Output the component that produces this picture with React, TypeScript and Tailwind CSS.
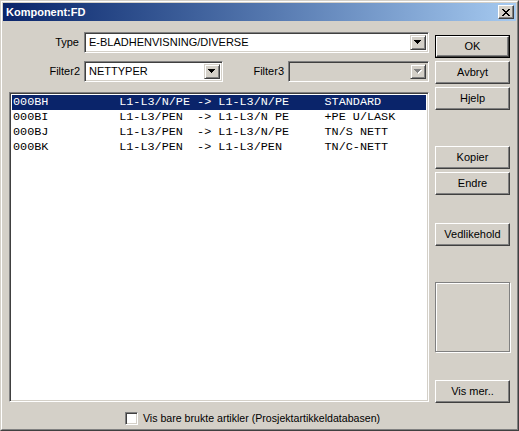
import React from "react";

const rows = [
  "000BH          L1-L3/N/PE -> L1-L3/N/PE     STANDARD",
  "000BI          L1-L3/PEN  -> L1-L3/N PE     +PE U/LASK",
  "000BJ          L1-L3/PEN  -> L1-L3/N/PE     TN/S NETT",
  "000BK          L1-L3/PEN  -> L1-L3/PEN      TN/C-NETT",
];

const raised =
  "border border-t-white border-l-white border-r-[#404040] border-b-[#404040] shadow-[inset_-1px_-1px_#808080]";
const sunken =
  "border border-t-[#808080] border-l-[#808080] border-r-white border-b-white shadow-[inset_1px_1px_#404040,inset_-1px_-1px_#d4d0c8]";

const Arrow = ({ disabled }: { disabled?: boolean }) => (
  <svg width="8" height="5" viewBox="0 0 8 5" className="block">
    {disabled && (
      <path
        transform="translate(1 1)"
        fill="#ffffff"
        d="M0 0h7v1h-7z M1 1h5v1h-5z M2 2h3v1h-3z M3 3h1v1h-1z"
      />
    )}
    <path
      fill={disabled ? "#808080" : "#000000"}
      d="M0 0h7v1h-7z M1 1h5v1h-5z M2 2h3v1h-3z M3 3h1v1h-1z"
    />
  </svg>
);

const DropButton = ({ disabled }: { disabled?: boolean }) => (
  <div className="w-[16px] h-full flex items-center justify-center bg-[#d4d0c8] border border-t-[#d4d0c8] border-l-[#d4d0c8] border-r-[#404040] border-b-[#404040] shadow-[inset_1px_1px_white,inset_-1px_-1px_#808080]">
    <Arrow disabled={disabled} />
  </div>
);

const Combo = ({
  value,
  width,
  disabled,
}: {
  value?: string;
  width: string;
  disabled?: boolean;
}) => (
  <div
    className={`${width} h-[21px] ${sunken} p-[2px] flex ${
      disabled ? "bg-[#d4d0c8]" : "bg-white"
    }`}
  >
    <div className="flex-1 flex items-center pl-[2px] text-[11px] text-black leading-none whitespace-nowrap overflow-hidden">
      {value}
    </div>
    <DropButton disabled={disabled} />
  </div>
);

const Button = ({
  label,
  className = "",
  isDefault,
}: {
  label: string;
  className?: string;
  isDefault?: boolean;
}) =>
  isDefault ? (
    <div className={`h-[23px] w-[75px] border border-black ${className}`}>
      <div
        className={`h-full w-full ${raised} flex items-center justify-center text-[11px] text-black`}
      >
        {label}
      </div>
    </div>
  ) : (
    <div
      className={`h-[23px] w-[75px] ${raised} flex items-center justify-center text-[11px] text-black ${className}`}
    >
      {label}
    </div>
  );

export default function App() {
  return (
    <div className="w-[519px] h-[431px] bg-[#d4d0c8] border border-t-[#d4d0c8] border-l-[#d4d0c8] border-r-[#404040] border-b-[#404040] font-['Liberation_Sans',Arial,sans-serif] select-none">
      <div className="h-full border border-t-white border-l-white border-r-[#808080] border-b-[#808080] p-px flex flex-col">
        {/* title bar */}
        <div className="h-[18px] flex items-center justify-between pl-[3px] pr-[2px] bg-gradient-to-r from-[#0a246a] to-[#a6caf0]">
          <span className="text-white font-bold text-[11px] leading-none">
            Komponent:FD
          </span>
          <div
            className={`w-[16px] h-[14px] bg-[#d4d0c8] ${raised} flex items-center justify-center`}
          >
            <svg width="8" height="7" viewBox="0 0 8 7" className="block">
              <path
                fill="#000"
                d="M0 0h2v1h-2z M6 0h2v1h-2z M1 1h2v1h-2z M5 1h2v1h-2z M2 2h4v1h-4z M3 3h2v1h-2z M2 4h4v1h-4z M1 5h2v1h-2z M5 5h2v1h-2z M0 6h2v1h-2z M6 6h2v1h-2z"
              />
            </svg>
          </div>
        </div>

        {/* body */}
        <div className="flex pl-[6px]">
          {/* left */}
          <div className="w-[420px] pt-[11px] flex flex-col">
            <div className="flex items-center">
              <div className="w-[75px] pr-[5px] text-right text-[11px] text-black">
                Type
              </div>
              <Combo value="E-BLADHENVISNING/DIVERSE" width="w-[345px]" />
            </div>
            <div className="flex items-center mt-[8px]">
              <div className="w-[75px] pr-[4px] text-right text-[11px] text-black">
                Filter2
              </div>
              <Combo value="NETTYPER" width="w-[139px]" />
              <div className="w-[65px] pr-[4px] text-right text-[11px] text-black">
                Filter3
              </div>
              <Combo width="w-[141px]" disabled />
            </div>
            <div className={`mt-[10px] h-[310px] bg-white ${sunken} p-[2px]`}>
              {rows.map((r, i) => (
                <div
                  key={r}
                  className={`h-[15px] pl-[1px] flex items-center whitespace-pre font-['Liberation_Mono','Courier_New',monospace] text-[11.8px] leading-none ${
                    i === 0 ? "bg-[#0a246a] text-white" : "text-black"
                  }`}
                >
                  {r}
                </div>
              ))}
            </div>
          </div>

          {/* right */}
          <div className="ml-[6px] w-[75px] pt-[14px] flex flex-col">
            <Button label="OK" isDefault />
            <Button label="Avbryt" className="mt-[3px]" />
            <Button label="Hjelp" className="mt-[3px]" />
            <Button label="Kopier" className="mt-[36px]" />
            <Button label="Endre" className="mt-[3px]" />
            <Button label="Vedlikehold" className="mt-[28px]" />
            <div className="mt-[36px] h-[70px] w-[75px] border border-[#808080] shadow-[inset_1px_1px_white,1px_1px_white]" />
            <Button label="Vis mer.." className="mt-[28px]" />
          </div>
        </div>

        {/* bottom */}
        <div className="mt-[9px] pl-[122px] flex items-center h-[13px]">
          <div className={`w-[13px] h-[13px] bg-white ${sunken}`} />
          <span className="ml-[5px] text-[10.6px] text-black leading-none">
            Vis bare brukte artikler (Prosjektartikkeldatabasen)
          </span>
        </div>
      </div>
    </div>
  );
}
